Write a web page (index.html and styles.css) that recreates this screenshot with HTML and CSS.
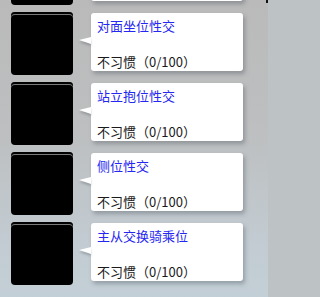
FILE: index.html
```html
<!DOCTYPE html>
<html lang="zh">
<head>
<meta charset="utf-8">
<link rel="stylesheet" href="styles.css">
</head>
<body>
<div class="mark"></div>
<div class="list">
  <div class="row">
    <div class="thumb"></div>
    <div class="card"><span class="tail"></span></div>
  </div>
  <div class="row">
    <div class="thumb"></div>
    <div class="card"><span class="tail"></span>
      <div class="title">对面坐位性交</div>
      <div class="status">不习惯（0/100）</div>
    </div>
  </div>
  <div class="row">
    <div class="thumb"></div>
    <div class="card"><span class="tail"></span>
      <div class="title">站立抱位性交</div>
      <div class="status">不习惯（0/100）</div>
    </div>
  </div>
  <div class="row">
    <div class="thumb"></div>
    <div class="card"><span class="tail"></span>
      <div class="title">侧位性交</div>
      <div class="status">不习惯（0/100）</div>
    </div>
  </div>
  <div class="row">
    <div class="thumb"></div>
    <div class="card"><span class="tail"></span>
      <div class="title">主从交换骑乘位</div>
      <div class="status">不习惯（0/100）</div>
    </div>
  </div>
</div>
</body>
</html>
```
FILE: styles.css
```css
html, body {
  margin: 0;
  padding: 0;
}
html {
  background: #bdc2c5;
}
body {
  width: 268px;
  height: 297px;
  overflow: hidden;
  position: relative;
  background: linear-gradient(180deg, #bababa 0%, #bdbfc0 45%, #c2cbd1 80%, #c3cfd6 100%);
  font-family: "Noto Sans CJK SC", "Noto Sans", sans-serif;
}
.mark {
  position: absolute;
  left: 266px;
  top: 0;
  width: 2px;
  height: 3px;
  background: #111;
}
.list {
  display: flex;
  flex-direction: column;
  gap: 7px;
  margin-top: -58px;
  padding-left: 11px;
}
.row {
  display: flex;
  align-items: flex-start;
  height: 63px;
}
.thumb {
  width: 62px;
  height: 63px;
  flex: none;
  background: #000;
  border-radius: 4px;
  box-shadow: inset 0 2px 0 #000, inset 0 3px 0 #7a7a7a;
}
.card {
  position: relative;
  margin-left: 18px;
  margin-top: 1px;
  width: 152px;
  height: 58px;
  box-sizing: border-box;
  padding: 4px 6px 1px 6px;
  background: #fff;
  border-radius: 3px;
  box-shadow: 2px 3px 4px rgba(60, 70, 80, 0.35);
  display: flex;
  flex-direction: column;
  justify-content: space-between;
}
.tail {
  position: absolute;
  left: -12px;
  top: 24px;
  width: 0;
  height: 0;
  border-right: 12px solid #fff;
  border-top: 3px solid transparent;
  border-bottom: 4px solid transparent;
  filter: drop-shadow(0 2px 1px rgba(60, 70, 80, 0.3));
}
.title {
  font-size: 13px;
  line-height: 17px;
  color: #2626f2;
  white-space: nowrap;
}
.status {
  font-size: 13px;
  line-height: 17px;
  color: #1a1a1a;
  white-space: nowrap;
}
```
